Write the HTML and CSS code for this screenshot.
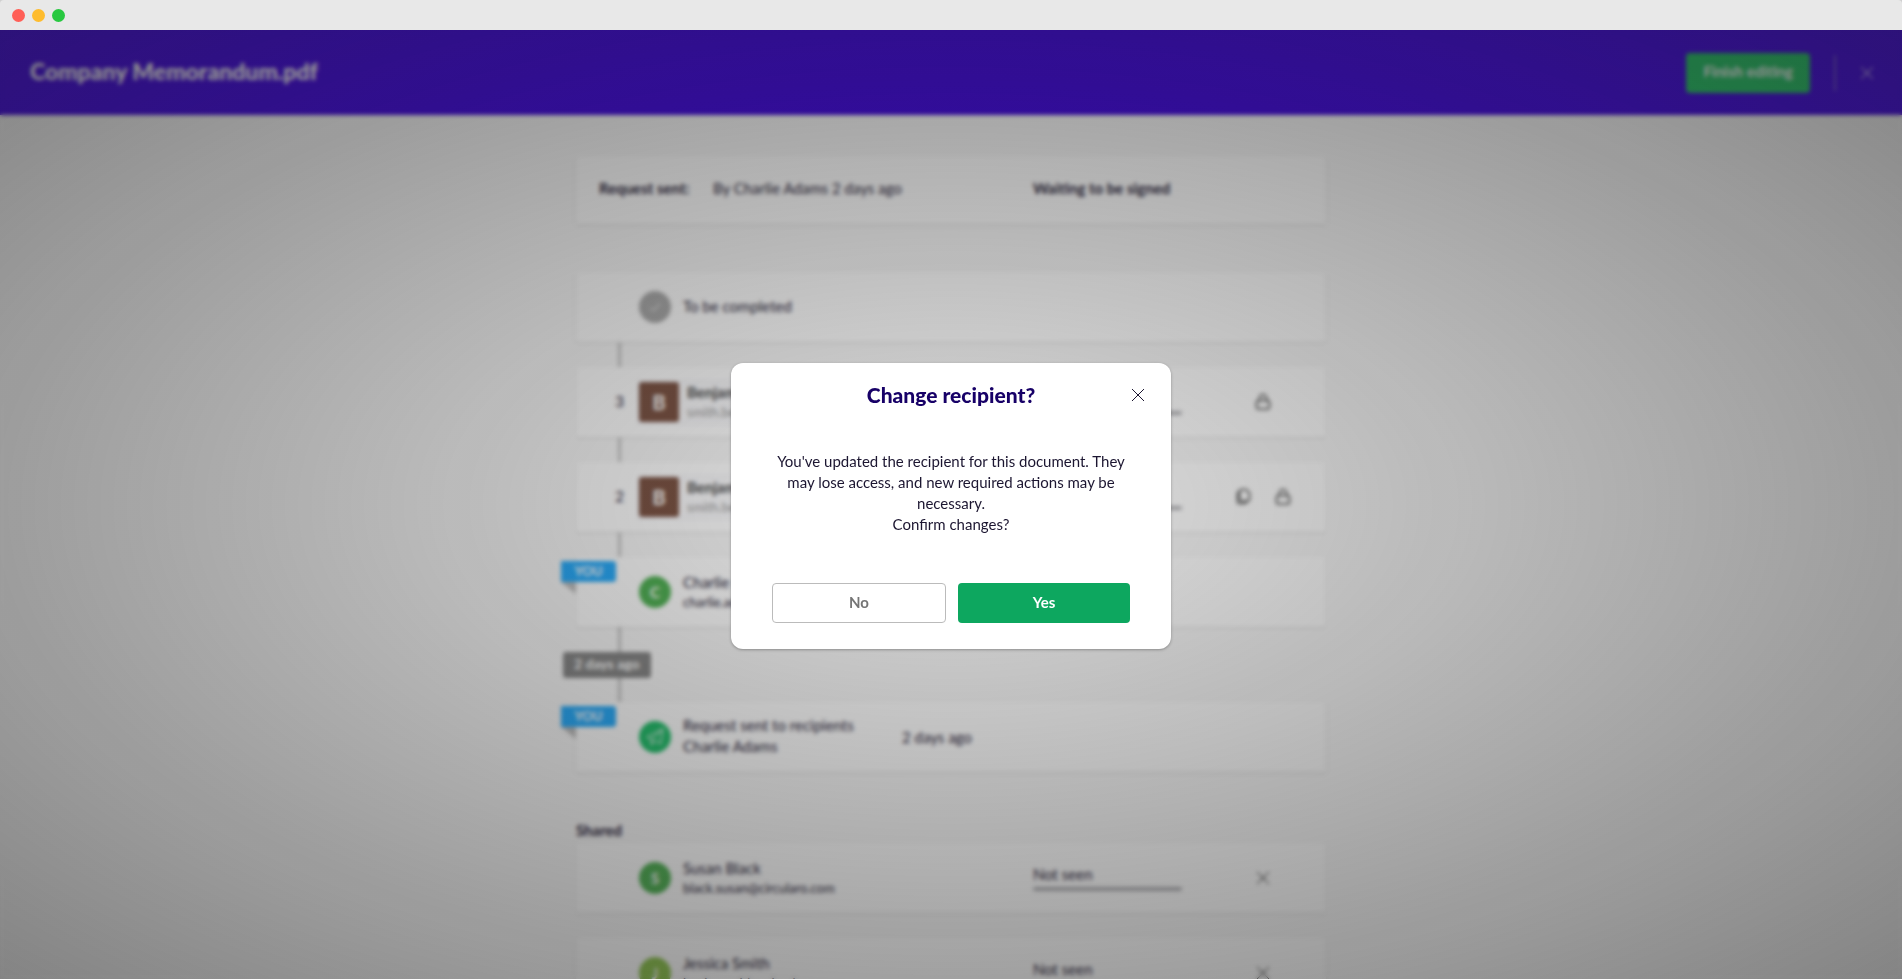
FILE: index.html
```html
<!DOCTYPE html>
<html lang="en">
<head>
  <meta charset="UTF-8">
  <title>Company Memorandum.pdf</title>
  <link rel="stylesheet" href="styles.css">
</head>
<body>
  <svg class="sprite" aria-hidden="true">
    <symbol id="icon-close" viewBox="0 0 14 14">
      <path d="M1 1l12 12M13 1L1 13" fill="none" stroke="currentColor"/>
    </symbol>
    <symbol id="icon-lock" viewBox="0 0 20 20">
      <rect x="3.500" y="8.500" width="13" height="8.500" rx="2.500" fill="none" stroke="currentColor" stroke-width="1.500"/>
      <path d="M6.500 8.500V6a3.500 3.500 0 0 1 7 0v2.500" fill="none" stroke="currentColor" stroke-width="1.500"/>
    </symbol>
    <symbol id="icon-copy" viewBox="0 0 20 20">
      <path d="M8.500 2.500h4.500l3.500 3.500v6a2 2 0 0 1-2 2H8.500a2 2 0 0 1-2-2v-7.500a2 2 0 0 1 2-2z" fill="none" stroke="currentColor" stroke-width="1.500"/>
      <path d="M6.500 5a2 2 0 0 0-2 2v7.500a2 2 0 0 0 2 2h5a2 2 0 0 0 2-2" fill="none" stroke="currentColor" stroke-width="1.500"/>
    </symbol>
    <symbol id="icon-check" viewBox="0 0 32 32">
      <path d="M11 16.500l3.500 3.500 6.500-8" fill="none" stroke="currentColor"/>
    </symbol>
    <symbol id="icon-send" viewBox="0 0 32 32">
      <path d="M24 8L8 16l4.500 2.500L24 8l-2.500 15-6-3.500M12.500 18.500V24l3-4.500" fill="none" stroke="currentColor" stroke-linejoin="round"/>
    </symbol>
  </svg>

  <div class="titlebar">
    <span class="dot dot-red"></span>
    <span class="dot dot-yellow"></span>
    <span class="dot dot-green"></span>
  </div>

  <div class="app">
    <header class="header">
      <h1 class="header-title">Company Memorandum.pdf</h1>
      <div class="header-actions">
        <button class="btn btn-finish">Finish editing</button>
        <span class="divider"></span>
        <button class="icon-btn header-close" aria-label="Close"><svg><use href="#icon-close"/></svg></button>
      </div>
    </header>

    <main class="content">
      <section class="card summary">
        <b>Request sent:</b>
        <span>By Charlie Adams 2 days ago</span>
        <b>Waiting to be signed</b>
      </section>

      <section class="timeline">
        <div class="card row">
          <span class="step"></span>
          <div class="person">
            <span class="avatar avatar-grey"><svg><use href="#icon-check"/></svg></span>
            <span>To be completed</span>
          </div>
        </div>

        <div class="card row linked">
          <span class="step">3</span>
          <div class="person recipient">
            <span class="avatar avatar-square">B</span>
            <div class="recipient-text">
              <div class="recipient-name">Benjamin</div>
              <div class="recipient-mail">smith.benjamin</div>
            </div>
          </div>
          <div class="status"><span class="bar"></span></div>
          <div class="actions">
            <button class="icon-btn" aria-label="Lock"><svg><use href="#icon-lock"/></svg></button>
          </div>
        </div>

        <div class="card row linked">
          <span class="step">2</span>
          <div class="person recipient">
            <span class="avatar avatar-square">B</span>
            <div class="recipient-text">
              <div class="recipient-name">Benjamin</div>
              <div class="recipient-mail">smith.benjamin</div>
            </div>
          </div>
          <div class="status"><span class="bar"></span></div>
          <div class="actions">
            <button class="icon-btn" aria-label="Copy"><svg><use href="#icon-copy"/></svg></button>
            <button class="icon-btn" aria-label="Lock"><svg><use href="#icon-lock"/></svg></button>
          </div>
        </div>

        <div class="card row linked">
          <span class="you">YOU</span>
          <span class="step"></span>
          <div class="person">
            <span class="avatar avatar-green">C</span>
            <div>
              <div>Charlie</div>
              <div class="mail">charlie.adams</div>
            </div>
          </div>
        </div>

        <div class="date-break"><span class="date-badge">2 days ago</span></div>

        <div class="card row">
          <span class="you">YOU</span>
          <span class="step"></span>
          <div class="person">
            <span class="avatar avatar-sent"><svg><use href="#icon-send"/></svg></span>
            <div>
              <div>Request sent to recipients</div>
              <div>Charlie Adams</div>
            </div>
          </div>
          <div class="time">2 days ago</div>
        </div>
      </section>

      <section class="timeline shared">
        <h2 class="shared-title">Shared</h2>
        <div class="card row">
          <span class="step"></span>
          <div class="person">
            <span class="avatar avatar-green">S</span>
            <div>
              <div>Susan Black</div>
              <div class="mail">black.susan@circularo.com</div>
            </div>
          </div>
          <div class="status">Not seen<span class="bar"></span></div>
          <div class="actions">
            <button class="icon-btn remove" aria-label="Remove"><svg><use href="#icon-close"/></svg></button>
          </div>
        </div>

        <div class="card row">
          <span class="step"></span>
          <div class="person">
            <span class="avatar avatar-lime">J</span>
            <div>
              <div>Jessica Smith</div>
              <div class="mail">jessica.smith@circularo.com</div>
            </div>
          </div>
          <div class="status">Not seen<span class="bar"></span></div>
          <div class="actions">
            <button class="icon-btn remove" aria-label="Remove"><svg><use href="#icon-close"/></svg></button>
          </div>
        </div>
      </section>
    </main>

    <div class="overlay">
      <div class="modal" role="dialog" aria-labelledby="modal-title">
        <h2 class="modal-title" id="modal-title">Change recipient?</h2>
        <button class="icon-btn modal-close" aria-label="Close"><svg><use href="#icon-close"/></svg></button>
        <p class="modal-text">You've updated the recipient for this document. They may lose access, and new required actions may be necessary.<br>Confirm changes?</p>
        <div class="modal-buttons">
          <button class="btn btn-no">No</button>
          <button class="btn btn-yes">Yes</button>
        </div>
      </div>
    </div>
  </div>
</body>
</html>
```

FILE: styles.css
```css
* {
  box-sizing: border-box;
}
body {
  margin: 0;
  height: 100vh;
  display: flex;
  flex-direction: column;
  overflow: hidden;
  background: #d0d0d0;
  font-family: Lato, "Liberation Sans", sans-serif;
  font-size: 15px;
  line-height: 21px;
  color: #1c1631;
}
button {
  font: inherit;
  color: inherit;
  cursor: pointer;
}
.sprite {
  display: none;
}

/* window bar */
.titlebar {
  height: 30px;
  flex: none;
  display: flex;
  align-items: center;
  gap: 7px;
  padding-left: 12px;
  background: #e8e8e8;
  border-radius: 4px 4px 0 0;
}
.dot {
  width: 13px;
  height: 13px;
  border-radius: 50%;
}
.dot-red { background: #ff5f57; }
.dot-yellow { background: #febc2e; }
.dot-green { background: #28c840; }

.app {
  position: relative;
  flex: 1;
  min-height: 0;
  overflow: hidden;
  background: #f9f9f9;
}

/* header */
.header {
  height: 85px;
  display: flex;
  align-items: center;
  justify-content: space-between;
  padding: 0 28px 0 30px;
  background: #3c00e0;
}
.header-title {
  margin: 0;
  padding-bottom: 3px;
  font-size: 23px;
  line-height: 30px;
  font-weight: 900;
  color: #fff;
}
.header-actions {
  display: flex;
  align-items: center;
  gap: 24px;
}
.btn {
  height: 40px;
  border: 0;
  border-radius: 4px;
  padding: 0 0 2px;
  font-weight: 700;
}
.btn-finish {
  padding: 0 17px 2px;
  background: #20c463;
  color: #fff;
}
.divider {
  width: 2px;
  height: 36px;
  background: #6a4ad0;
}
.icon-btn {
  width: 20px;
  height: 20px;
  padding: 0;
  border: 0;
  background: none;
  color: #444;
}
.icon-btn svg {
  display: block;
  width: 100%;
  height: 100%;
}
.header-close {
  width: 14px;
  height: 14px;
  color: #fff;
}

/* cards */
.content {
  max-width: 750px;
  margin: 0 auto;
  padding-top: 41px;
}
.card {
  background: #fff;
  border-radius: 2px;
  box-shadow: 0 1px 3px rgba(0,0,0,0.12);
}
.summary {
  height: 68px;
  display: grid;
  grid-template-columns: 114px 320px 1fr;
  align-items: center;
  padding: 0 0 3px 23px;
  margin-bottom: 48px;
}
.timeline {
  display: flex;
  flex-direction: column;
  gap: 25px;
}
.row {
  position: relative;
  height: 70px;
  display: grid;
  grid-template-columns: 63px 263px 131px 149px 1fr;
  align-items: center;
}
.linked::before {
  content: "";
  position: absolute;
  left: 42px;
  top: -25px;
  width: 3px;
  height: 25px;
  background: #c4c4c4;
}
.step {
  grid-column: 1;
  padding: 0 0 2px 24px;
  text-align: center;
}
.person {
  grid-column: 2;
  display: flex;
  align-items: center;
  gap: 12px;
}
.avatar {
  flex: none;
  width: 32px;
  height: 32px;
  display: flex;
  align-items: center;
  justify-content: center;
  border-radius: 50%;
  color: #fff;
  font-weight: 700;
}
.avatar + * {
  padding-bottom: 2px;
}
.avatar svg {
  width: 32px;
  height: 32px;
}
.avatar-grey { background: #a8a8a8; }
.avatar-green { background: #4caf50; }
.avatar-sent { background: #1cbd67; }
.avatar-lime { background: #8bc34a; }
.avatar-square {
  width: 40px;
  height: 40px;
  border-radius: 3px;
  background: #7a5040;
  font-size: 20px;
}
.mail {
  font-size: 13px;
  line-height: 18px;
}
.recipient {
  gap: 0;
  background: #fbfbfd;
  box-shadow: 0 0 0 1px #ededf3;
}
.recipient-text {
  padding-left: 8px;
}
.recipient-name {
  font-weight: 700;
  color: #444;
}
.recipient-mail {
  font-size: 13px;
  line-height: 18px;
  color: #999;
}
.time {
  grid-column: 3;
}
.status {
  grid-column: 4;
  min-height: 28px;
  display: flex;
  flex-direction: column;
  justify-content: flex-end;
  padding-bottom: 1px;
}
.bar {
  height: 4px;
  margin-top: 2px;
  border-radius: 2px;
  background: #b0b0b4;
}
.actions {
  grid-column: 5;
  display: flex;
  justify-content: center;
  gap: 20px;
  padding-left: 18px;
}
.remove {
  width: 14px;
  height: 14px;
  color: #111;
}

/* ribbon on the left edge of own steps */
.you {
  position: absolute;
  left: -15px;
  top: 4px;
  width: 55px;
  height: 21px;
  background: #22a9fb;
  border-radius: 0 3px 3px 0;
  color: #fff;
  font-size: 13px;
  font-weight: 700;
  text-align: center;
}
.you::after {
  content: "";
  position: absolute;
  left: 0;
  top: 21px;
  border-top: 12px solid #bbb;
  border-left: 15px solid transparent;
}
.date-break {
  height: 75px;
  margin: -25px 0;
  padding-left: 42px;
  display: flex;
  align-items: center;
  background: linear-gradient(#c4c4c4, #c4c4c4) 42px 0 / 3px 100% no-repeat;
}
.date-badge {
  margin-left: -55px;
  padding: 2px 11px 4px;
  border-radius: 3px;
  background: #848484;
  color: #fff;
  font-size: 14px;
  font-weight: 700;
  line-height: 20px;
}
.shared {
  margin-top: 48px;
}
.shared-title {
  margin: 0 0 -23px;
  font-size: 15px;
  line-height: 21px;
}

/* dialog */
.overlay {
  position: absolute;
  inset: 0;
  display: flex;
  align-items: center;
  justify-content: center;
  padding-top: 3px;
  background: radial-gradient(ellipse, rgba(33,33,33,0.14), rgba(33,33,33,0.54));
  backdrop-filter: blur(2px);
}
.modal {
  position: relative;
  width: 440px;
  padding: 19px 41px 26px;
  background: #fff;
  border-radius: 12px;
  box-shadow: 0 1px 3px rgba(0,0,0,0.3);
}
.modal-title {
  margin: 0 0 44px;
  font-size: 21px;
  line-height: 25px;
  font-weight: 900;
  text-align: center;
  color: #170067;
}
.modal-close {
  position: absolute;
  top: 25px;
  right: 26px;
  width: 14px;
  height: 14px;
  color: #1c1631;
}
.modal-text {
  margin: 0 0 48px;
  text-align: center;
}
.modal-buttons {
  display: flex;
  gap: 12px;
}
.modal-buttons .btn {
  flex: 1 1 0;
  min-width: 0;
}
.modal-buttons .btn-no {
  background: #fff;
  border: 1px solid #bbb;
  color: #757575;
}
.btn-yes {
  background: #0da75f;
  color: #fff;
}
```
